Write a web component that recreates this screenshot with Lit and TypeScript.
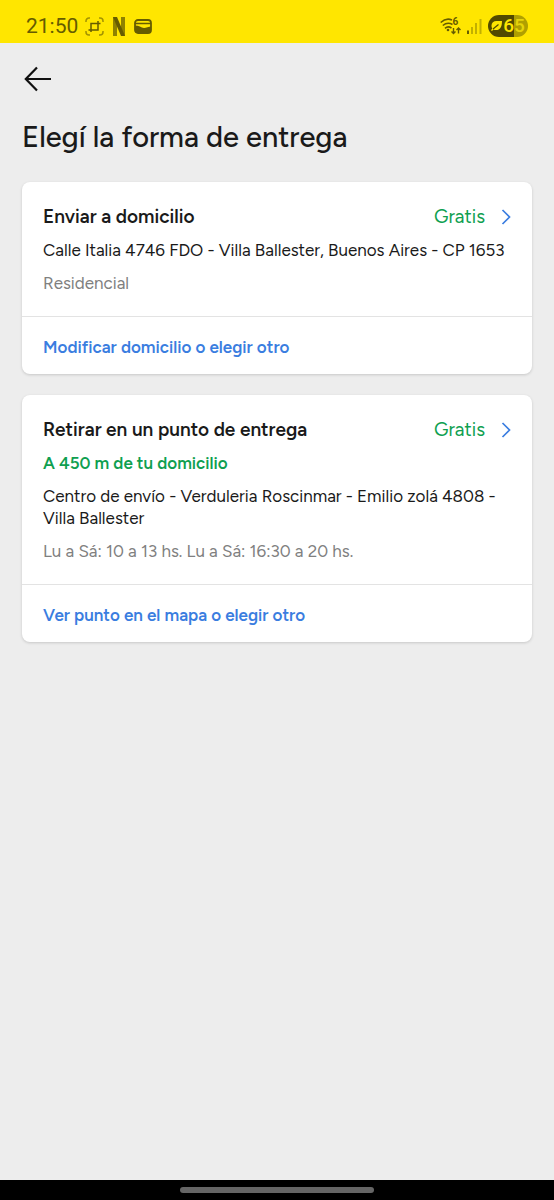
import { LitElement, html, css, svg } from "lit";
import { customElement, property } from "lit/decorators.js";

@customElement("status-bar")
class StatusBar extends LitElement {
  static styles = css`
    :host {
      display: flex;
      justify-content: space-between;
      align-items: center;
      box-sizing: border-box;
      height: 43px;
      padding: 9px 26px 0;
      background: #ffe600;
      color: #665c00;
      font-family: Roboto, sans-serif;
    }
    .group {
      display: flex;
      align-items: center;
    }
    .time {
      font-size: 21px;
      line-height: 24px;
      margin-right: 7px;
    }
    .left svg {
      margin-right: 9px;
    }
    .right {
      gap: 6px;
    }
    svg {
      display: block;
    }
    .battery {
      display: flex;
      align-items: center;
      justify-content: center;
      gap: 1px;
      box-sizing: border-box;
      width: 40px;
      height: 22px;
      border-radius: 11px;
      background: linear-gradient(90deg, #524a00 64%, #b0a000 64%);
      color: #ffe600;
      font-size: 19px;
      line-height: 22px;
      font-weight: 500;
    }
    .faded {
      color: #e6d40a;
    }
    .six {
      font: 700 10px Roboto, sans-serif;
    }
  `;

  render() {
    return html`
      <div class="group left">
        <span class="time">21:50</span>
        <svg width="19" height="19" viewBox="0 0 19 19" fill="none" stroke="#665c00" aria-hidden="true">
          <path opacity=".6" stroke-width="1.500" d="M1 5V4a3 3 0 0 1 3-3h1M14 1h1a3 3 0 0 1 3 3v1M18 14v1a3 3 0 0 1-3 3h-1M5 18H4a3 3 0 0 1-3-3v-1" />
          <path stroke-width="1.500" d="M3.500 13h9.500V4M6 15V6.500h9.500" />
        </svg>
        <svg width="12" height="19" viewBox="0 0 12 19" aria-hidden="true">
          <path fill="#8f8200" d="M0 0h4v19H0zM8 0h4v19H8z" />
          <path fill="#665c00" d="M0 0h4l8 19H8z" />
        </svg>
        <svg width="18" height="15" viewBox="0 0 18 15" aria-hidden="true">
          <rect x="1" y="1" width="16" height="13" rx="3" fill="none" stroke="#665c00" stroke-width="1.800" />
          <path fill="#665c00" d="M1 3.800h16v1.400H1zM1 6.500c4 0 6 2 9 2.500 2 0 5-1.200 7-1.500V12a2 2 0 0 1-2 2H3a2 2 0 0 1-2-2z" />
        </svg>
      </div>
      <div class="group right">
        <svg width="21" height="18" viewBox="0 0 21 18" aria-hidden="true">
          <g fill="none" stroke="#665c00" stroke-width="1.600">
            <path d="M.700 5.500Q6 .500 12 3M2.800 8.500Q7.500 4.500 12.500 7.500M5 11.300Q8 8.500 11.500 11" />
            <path stroke-width="1.400" d="M13.500 11v5.500M11.500 14.500l2 2 2-2M18.500 16.500V11M16.500 13l2-2 2 2" />
          </g>
          <circle cx="8" cy="13" r="1.300" fill="#665c00" />
          ${svg`<text class="six" x="12.500" y="8" fill="#665c00">6</text>`}
        </svg>
        <svg width="15" height="16" viewBox="0 0 15 16" fill="#c2b000" aria-hidden="true">
          <path fill="#665c00" d="M0 12.500h2V16H0z" />
          <path d="M4 9h2v7H4zM8 5h2v11H8zM12.500 1h2v15h-2z" />
        </svg>
        <span class="battery">
          <svg width="11" height="12" viewBox="0 0 11 12" aria-hidden="true">
            <path fill="#ffe600" d="M11 1H5.500C2.500 1 .5 3 .5 5.500c0 1.500.3 2.300.8 3L0 10.200l1 .9 1.500-1.500c.8.400 1.500.500 2.500.500C9 10 11 7 11 1z" />
            <path fill="none" stroke="#524a00" stroke-width="1.200" d="M2 9l5.500-4.500" />
          </svg>
          <span>6<span class="faded">5</span></span>
        </span>
      </div>
    `;
  }
}

@customElement("delivery-card")
class DeliveryCard extends LitElement {
  @property() heading = "";
  @property() distance = "";
  @property() address = "";
  @property() note = "";
  @property() action = "";

  static styles = css`
    :host {
      display: block;
      border-radius: 8px;
      background: #fff;
      box-shadow: 0 1px 3px rgba(0, 0, 0, 0.16);
      font-size: 17px;
      line-height: 22px;
      color: #1a1a1a;
    }
    .option {
      display: flex;
      flex-direction: column;
      gap: 11px;
      width: 100%;
      box-sizing: border-box;
      margin: 0;
      padding: 24px 20px 22px 21px;
      border: 0;
      background: none;
      font: inherit;
      color: inherit;
      text-align: left;
      cursor: pointer;
    }
    .head {
      display: flex;
      align-items: center;
    }
    .heading {
      flex: 1;
      font-size: 19px;
      font-weight: 600;
    }
    .price {
      font-size: 19px;
      color: #0f9f50;
      margin-right: 16px;
    }
    .chevron {
      display: block;
    }
    .distance {
      font-weight: 600;
      color: #0f9f50;
    }
    .note {
      color: #808080;
    }
    .action {
      display: block;
      padding: 19px 21px 16px;
      border-top: 1px solid #e3e3e3;
      color: #3a7de0;
      font-weight: 600;
      text-decoration: none;
    }
  `;

  render() {
    return html`
      <button class="option" type="button">
        <span class="head">
          <span class="heading">${this.heading}</span>
          <span class="price">Gratis</span>
          <svg class="chevron" width="11" height="16" viewBox="0 0 11 16" fill="none" aria-hidden="true">
            <path d="M1.500 1l7 7-7 7" stroke="#3a7de0" stroke-width="1.700" />
          </svg>
        </span>
        ${this.distance ? html`<span class="distance">${this.distance}</span>` : ""}
        <span>${this.address}</span>
        <span class="note">${this.note}</span>
      </button>
      <a class="action" href="#">${this.action}</a>
    `;
  }
}

@customElement("app-root")
class AppRoot extends LitElement {
  static styles = css`
    :host {
      display: flex;
      flex-direction: column;
      min-height: 100vh;
      background: #ededed;
      font-family: Figtree, "Proxima Nova", Lato, sans-serif;
    }
    main {
      flex: 1;
      padding: 20px 22px;
    }
    .back {
      display: block;
      padding: 2px;
      margin: 0;
      border: 0;
      background: none;
      cursor: pointer;
    }
    .back svg {
      display: block;
    }
    h1 {
      margin: 24px 0 27px;
      font-size: 29px;
      line-height: 36px;
      font-weight: 500;
      color: #1a1a1a;
    }
    .cards {
      display: flex;
      flex-direction: column;
      gap: 21px;
    }
    footer {
      display: flex;
      align-items: center;
      justify-content: center;
      height: 20px;
      background: #000;
    }
    .handle {
      width: 35%;
      height: 6px;
      border-radius: 3px;
      background: #666;
    }
  `;

  render() {
    return html`
      <status-bar></status-bar>
      <main>
        <button class="back" type="button" aria-label="Volver">
          <svg width="28" height="28" viewBox="0 0 28 28" fill="none" stroke="#111" stroke-width="2.200" aria-hidden="true">
            <path d="M13 2.500L1.800 14 13 25.500M2 14h25" />
          </svg>
        </button>
        <h1>Elegí la forma de entrega</h1>
        <div class="cards">
          <delivery-card
            heading="Enviar a domicilio"
            address="Calle Italia 4746 FDO - Villa Ballester, Buenos Aires - CP 1653"
            note="Residencial"
            action="Modificar domicilio o elegir otro"
          ></delivery-card>
          <delivery-card
            heading="Retirar en un punto de entrega"
            distance="A 450 m de tu domicilio"
            address="Centro de envío - Verduleria Roscinmar - Emilio zolá 4808 - Villa Ballester"
            note="Lu a Sá: 10 a 13 hs. Lu a Sá: 16:30 a 20 hs."
            action="Ver punto en el mapa o elegir otro"
          ></delivery-card>
        </div>
      </main>
      <footer><div class="handle"></div></footer>
    `;
  }
}
